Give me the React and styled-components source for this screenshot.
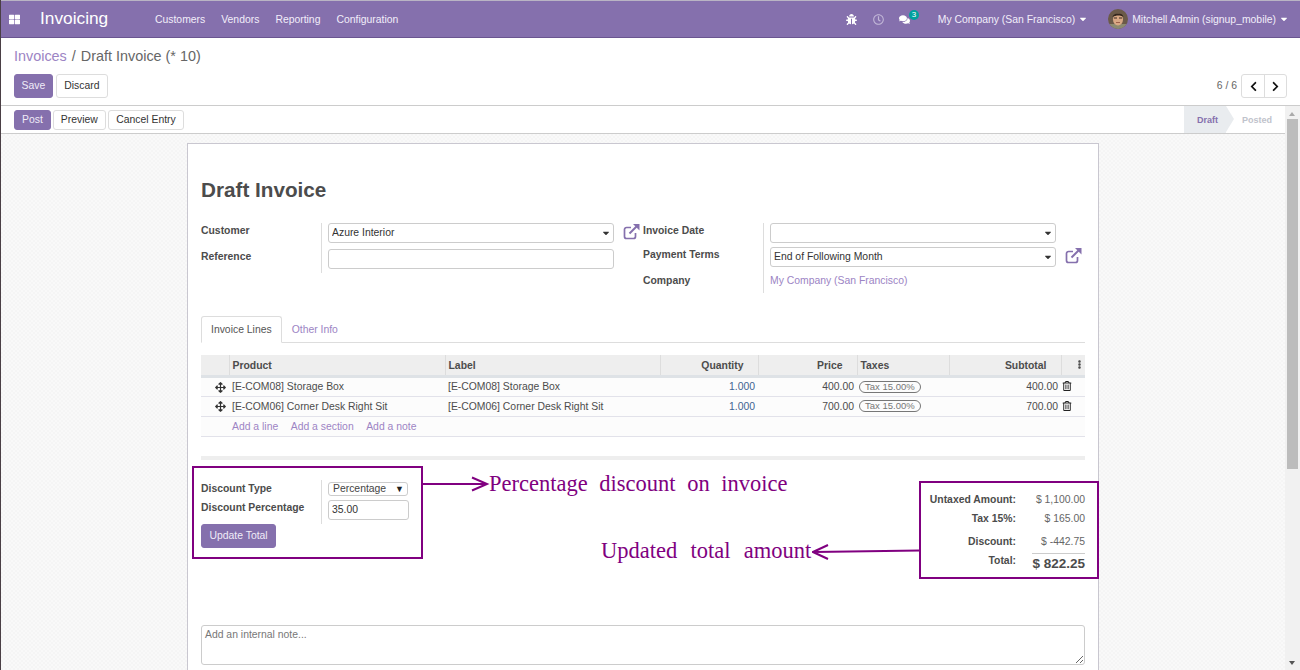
import React from 'react';
import styled, { createGlobalStyle } from 'styled-components';
import { FaThLarge, FaBug, FaRegClock, FaComments, FaCaretDown, FaChevronLeft, FaChevronRight, FaArrowsAlt, FaRegTrashAlt, FaEllipsisV } from 'react-icons/fa';

const NAV = '#8570ad';
const LINK = '#9c84c4';
const MARK = '#800080';
const UI_FONT = '10.4px "Liberation Sans", Arial, sans-serif';

const GlobalStyle = createGlobalStyle`
  html, body { margin: 0; padding: 0; height: 100%; overflow: hidden; }
  body {
    font: ${UI_FONT};
    color: #4c4c4c;
  }
  * { box-sizing: border-box; }
`;

const Page = styled.div`
  position: relative;
  width: 1300px;
  height: 670px;
  display: flex;
  flex-direction: column;
  overflow: hidden;
  background: #fff;
  border-left: 1px solid #4a3f45;
`;

const Navbar = styled.header`
  height: 38px;
  flex: none;
  display: flex;
  align-items: center;
  margin-left: -1px;
  background: ${NAV};
  border-top: 1px solid #b9b4c4;
  border-bottom: 1px solid #6a5590;
  color: #fff;
`;

const AppsIcon = styled.span`
  width: 40px;
  padding-left: 9px;
  display: flex;
  font-size: 11px;
`;

const Brand = styled.span`
  font-size: 17.3px;
  width: 115px;
  padding-bottom: 1px;
`;

const NavLink = styled.span`
  margin-right: 16px;
  color: #f2eefa;
`;

const NavSpacer = styled.div`
  flex: 1;
`;

const NavIcon = styled.span`
  position: relative;
  display: flex;
  font-size: 11px;
  margin-right: ${p => p.$gap}px;
  color: ${p => p.$dim ? '#c3b8d8' : '#fff'};
`;

const Badge = styled.span`
  position: absolute;
  left: 10px;
  top: -4px;
  padding: 0 3px;
  height: 10px;
  line-height: 10px;
  border-radius: 5px;
  background: #00a09d;
  color: #fff;
  font-size: 8px;
`;

const NavDrop = styled.span`
  display: flex;
  align-items: center;
  color: #f2eefa;
  gap: 3px;
  margin-right: ${p => p.$gap}px;
  svg { font-size: 10px; color: #fff; }
`;

const Avatar = styled.svg`
  width: 20px;
  height: 20px;
  margin-right: 4px;
  flex: none;
`;

const ControlPanel = styled.section`
  height: 68px;
  flex: none;
  padding: 7px 13px 0;
  border-bottom: 1px solid #ccc;
`;

const Breadcrumb = styled.div`
  font-size: 14.4px;
  line-height: 22px;
  color: #666;
  a { color: ${LINK}; }
  span { margin: 0 5px; }
`;

const PanelRow = styled.div`
  display: flex;
  align-items: center;
  justify-content: space-between;
  margin-top: 7px;
`;

const Buttons = styled.div`
  display: flex;
  gap: ${p => p.$gap || 3}px;
`;

const Button = styled.button`
  height: ${p => p.$h || 20}px;
  padding: 0 ${p => p.$px || 7}px ${p => p.$h ? 1 : 0}px;
  font: ${UI_FONT};
  border-radius: 3px;
  border: 1px solid ${p => p.$primary ? NAV : '#ddd'};
  background: ${p => p.$primary ? NAV : '#fff'};
  color: ${p => p.$primary ? '#f0ecf8' : '#333'};
`;

const Pager = styled.div`
  display: flex;
  align-items: center;
  gap: 4px;
  color: #666;
`;

const PagerText = styled.span`
  margin-bottom: 1px;
`;

const PagerGroup = styled.div`
  display: flex;
  border: 1px solid #ddd;
  border-radius: 3px;
  height: 24px;
`;

const PagerButton = styled.span`
  width: 22px;
  display: flex;
  align-items: center;
  justify-content: center;
  color: #111;
  font-size: 11px;
  & + & { border-left: 1px solid #ddd; }
`;

const Main = styled.div`
  flex: 1;
  min-height: 0;
  display: flex;
`;

const Content = styled.div`
  flex: 1;
  min-width: 0;
  display: flex;
  flex-direction: column;
`;

const StatusBar = styled.div`
  height: 28px;
  flex: none;
  display: flex;
  align-items: center;
  justify-content: space-between;
  padding-left: 13px;
  background: #fff;
  border-bottom: 1px solid #ccc;
`;

const Statuses = styled.div`
  display: flex;
  align-self: stretch;
  font-size: 9px;
  font-weight: bold;
`;

const Stage = styled.span`
  position: relative;
  display: flex;
  align-items: center;
  padding: 0 ${p => p.$active ? '8px' : '13px'} 0 ${p => p.$active ? '13px' : '16px'};
  color: ${p => p.$active ? '#8570ad' : '#bfc3cc'};
  background: ${p => p.$active ? '#e9ecef' : 'transparent'};
  &::after {
    content: '';
    display: ${p => p.$active ? 'block' : 'none'};
    position: absolute;
    left: 100%;
    top: 0;
    border-left: 8px solid #e9ecef;
    border-top: 13.5px solid transparent;
    border-bottom: 13.5px solid transparent;
  }
`;

const Backdrop = styled.div`
  flex: 1;
  min-height: 0;
  overflow: hidden;
  padding: 9px 0 0 186px;
  background-color: #f9f9f9;
  background-image: conic-gradient(#f5f5f5 25%, transparent 0 50%, #f5f5f5 0 75%, transparent 0);
  background-size: 4px 4px;
`;

const Sheet = styled.div`
  width: 912px;
  height: 560px;
  padding: 30px 13px 0 13px;
  background: #fff;
  border: 1px solid #c9c7d0;
  border-bottom: 0;
`;

const Title = styled.h1`
  margin: 0;
  font-size: 20.7px;
  line-height: 32px;
  font-weight: bold;
  color: #4c4c4c;
`;

const FormGrid = styled.div`
  display: grid;
  grid-template-columns: 442px 442px;
  margin-top: 17px;
  height: 70px;
`;

const Group = styled.div`
  display: grid;
  grid-template-columns: 120px 1fr;
  grid-auto-rows: min-content;
`;

const Label = styled.label`
  font-weight: bold;
  line-height: 14px;
  height: ${p => p.$h}px;
  padding-top: ${p => p.$top ?? 1}px;
  display: block;
  color: #4c4c4c;
`;

const Cell = styled.div`
  display: flex;
  align-items: flex-start;
  height: ${p => p.$h}px;
  padding-left: 6px;
  border-left: 1px solid #ddd;
`;

const FieldBox = styled.div`
  position: relative;
  width: ${p => p.$w || 286}px;
  height: 20px;
`;

const Field = styled.input`
  width: 100%;
  height: 100%;
  padding: 0 3px 1px;
  border: 1px solid #ccc;
  border-radius: 3px;
  background: #fff;
  font: ${UI_FONT};
  color: #333;
  outline: none;
`;

const Caret = styled(FaCaretDown)`
  position: absolute;
  right: 3px;
  top: 5px;
  font-size: 10px;
  color: #333;
`;

const External = styled.svg`
  width: 17px;
  height: 17px;
  margin-left: ${p => p.$gap}px;
  flex: none;
  color: #8570ad;
`;

const CompanyLink = styled.a`
  color: ${LINK};
  line-height: 14px;
  padding-top: 1px;
`;

const Tabs = styled.div`
  display: flex;
  align-items: flex-end;
  height: 27px;
  margin-top: 23px;
  border-bottom: 1px solid #ddd;
`;

const Tab = styled.span`
  height: ${p => p.$active ? 27 : 26}px;
  line-height: ${p => p.$active ? 26 : 28}px;
  padding: 0 ${p => p.$active ? 9 : 10}px;
  color: ${p => p.$active ? '#555' : LINK};
  background: #fff;
  ${p => p.$active && `
    border: 1px solid #ddd;
    border-bottom: 1px solid #fff;
    border-radius: 3px 3px 0 0;
    margin-bottom: -1px;
  `}
`;

const Lines = styled.table`
  width: 884px;
  margin-top: 12px;
  border-collapse: collapse;
  table-layout: fixed;
`;

const Th = styled.th`
  height: 21px;
  padding: 2px ${p => p.$right ? 14 : 2}px 0 3px;
  text-align: ${p => p.$right ? 'right' : 'left'};
  background: #eee;
  color: #4c4c4c;
  border-left: 1px solid #ddd;
  border-bottom: 3px solid #dee2e6;
  &:first-child { border-left: 0; }
`;

const Td = styled.td`
  height: 20px;
  padding: 0 ${p => p.$pr ?? 2}px 0 3px;
  text-align: ${p => p.$right ? 'right' : 'left'};
  background: #fcfcfc;
  color: ${p => p.$blue ? '#3f6491' : '#4c4c4c'};
  border-bottom: 1px solid #e2e2ea;
  white-space: nowrap;
`;

const Handle = styled(Td)`
  text-align: right;
  padding-right: 3px;
  color: #333;
  font-size: 11px;
  svg { vertical-align: middle; }
`;

const TrashCell = styled(Td)`
  color: #222;
  font-size: 10px;
  padding-left: 1px;
  svg { vertical-align: -1px; }
`;

const MoreIcon = styled(FaEllipsisV)`
  margin-left: 10px;
  font-size: 9px;
`;

const AddLink = styled.a`
  color: ${LINK};
  margin-right: 12.5px;
`;

const TaxPill = styled.span`
  display: inline-block;
  height: 12px;
  line-height: 9px;
  margin-left: -1px;
  padding: 0 5px;
  border: 1.5px solid #777;
  border-radius: 7px;
  font-size: 9.5px;
  color: #777;
  vertical-align: middle;
`;

const Divider = styled.div`
  height: 4px;
  margin-top: 19px;
  width: 884px;
  background: #eee;
`;

const Summary = styled.div`
  display: flex;
  justify-content: space-between;
  width: 884px;
  margin-top: 20px;
`;

const DiscountForm = styled.div`
  width: 210px;
`;

const DiscountRows = styled.div`
  display: grid;
  grid-template-columns: 120px 1fr;
  grid-auto-rows: min-content;
`;

const DiscountCell = styled.div`
  height: ${p => p.$h}px;
  padding-left: 6px;
  padding-top: ${p => p.$top || 0}px;
  border-left: 1px solid #ddd;
`;

const FakeSelect = styled.div`
  width: 80px;
  height: 14px;
  display: flex;
  align-items: center;
  justify-content: space-between;
  padding: 0 3px 0 4px;
  border: 1px solid #ccc;
  border-radius: 3px;
  color: #444;
  span:last-child { font-size: 9px; color: #222; }
`;

const Totals = styled.div`
  width: 180px;
  margin-top: 13px;
`;

const TotalRow = styled.div`
  display: flex;
  justify-content: space-between;
  height: ${p => p.$h}px;
  line-height: 14px;
`;

const TotalLabel = styled.span`
  font-weight: bold;
  width: 111px;
  text-align: right;
`;

const TotalValue = styled.span`
  color: #666;
`;

const GrandRow = styled(TotalRow)`
  position: relative;
  &::before {
    content: '';
    position: absolute;
    right: 0;
    top: -1px;
    width: 53px;
    border-top: 1px solid #ccc;
  }
`;

const GrandValue = styled.span`
  font-size: 13.5px;
  font-weight: bold;
  color: #4c4c4c;
  padding-top: 3px;
`;

const Note = styled.textarea`
  display: block;
  width: 884px;
  height: 40px;
  margin-top: 51px;
  padding: 3px 3px;
  border: 1px solid #ccc;
  border-radius: 3px;
  outline: none;
  font: ${UI_FONT};
  &::placeholder { color: #777; }
`;

const ScrollTrack = styled.div`
  width: 15px;
  flex: none;
  background: #f1f1f1;
  position: relative;
`;

const ScrollThumb = styled.div`
  position: absolute;
  top: 13px;
  left: 2px;
  width: 11px;
  height: 350px;
  background: #bcbcbc;
`;

const ScrollArrow = styled.span`
  position: absolute;
  left: 4px;
  ${p => p.$down ? 'bottom: 5px;' : 'top: 6px;'}
  border-left: 3.5px solid transparent;
  border-right: 3.5px solid transparent;
  ${p => p.$down ? 'border-top: 4px solid #555;' : 'border-bottom: 4px solid #aaa;'}
`;

const MarkBox = styled.div`
  position: absolute;
  left: ${p => p.$x}px;
  top: ${p => p.$y}px;
  width: ${p => p.$w}px;
  height: ${p => p.$h}px;
  border: 2px solid ${MARK};
  pointer-events: none;
`;

const MarkText = styled.div`
  position: absolute;
  left: ${p => p.$x}px;
  top: ${p => p.$y}px;
  font-family: "Liberation Serif", serif;
  font-size: 22.5px;
  line-height: 26px;
  word-spacing: ${p => p.$ws}px;
  color: ${MARK};
  white-space: nowrap;
`;

const MarkArrow = styled.svg`
  position: absolute;
  left: ${p => p.$x}px;
  top: ${p => p.$y}px;
  fill: none;
  stroke: ${MARK};
  stroke-width: 2;
`;

const ExternalIcon = ({ gap }) => (
  <External $gap={gap} viewBox="0 0 17 17">
    <path d="M12.5 10v3.5a2 2 0 0 1-2 2h-7a2 2 0 0 1-2-2v-7a2 2 0 0 1 2-2H8" fill="none" stroke="currentColor" strokeWidth="1.7" />
    <path d="M6.5 10.5L14 3" fill="none" stroke="currentColor" strokeWidth="2" />
    <path d="M10 1h6.5v6.5z" fill="currentColor" />
  </External>
);

const rows = [
  { code: '[E-COM08] Storage Box', price: '400.00' },
  { code: '[E-COM06] Corner Desk Right Sit', price: '700.00' },
];

export default function App() {
  return (
    <Page>
      <GlobalStyle />
      <Navbar>
        <AppsIcon><FaThLarge /></AppsIcon>
        <Brand>Invoicing</Brand>
        <NavLink>Customers</NavLink>
        <NavLink>Vendors</NavLink>
        <NavLink>Reporting</NavLink>
        <NavLink>Configuration</NavLink>
        <NavSpacer />
        <NavIcon $gap={16}><FaBug /></NavIcon>
        <NavIcon $gap={15} $dim><FaRegClock /></NavIcon>
        <NavIcon $gap={28}><FaComments /><Badge>3</Badge></NavIcon>
        <NavDrop $gap={20}>My Company (San Francisco) <FaCaretDown /></NavDrop>
        <Avatar viewBox="0 0 20 20">
          <clipPath id="face"><circle cx="10" cy="10" r="10" /></clipPath>
          <g clipPath="url(#face)">
            <rect width="20" height="20" fill="#6b5a48" />
            <rect y="15" width="20" height="5" fill="#8d8a70" />
            <ellipse cx="10" cy="10.5" rx="5" ry="6" fill="#d9a884" />
            <path d="M4.5 8C5 3.5 15 3 15.5 8 13 6 8 6 4.5 8z" fill="#33261d" />
            <path d="M6 9h3M11 9h3" stroke="#3a2a20" strokeWidth="1" />
            <path d="M8 13.5h4" stroke="#a0614a" strokeWidth="1" />
          </g>
        </Avatar>
        <NavDrop $gap={11}>Mitchell Admin (signup_mobile) <FaCaretDown /></NavDrop>
      </Navbar>

      <ControlPanel>
        <Breadcrumb><a>Invoices</a><span>/</span>Draft Invoice (* 10)</Breadcrumb>
        <PanelRow>
          <Buttons>
            <Button $primary $h={24} $px={6.5}>Save</Button>
            <Button $h={24} $px={7.5}>Discard</Button>
          </Buttons>
          <Pager>
            <PagerText>6 / 6</PagerText>
            <PagerGroup>
              <PagerButton><FaChevronLeft /></PagerButton>
              <PagerButton><FaChevronRight /></PagerButton>
            </PagerGroup>
          </Pager>
        </PanelRow>
      </ControlPanel>

      <Main>
        <Content>
          <StatusBar>
            <Buttons $gap={2}>
              <Button $primary>Post</Button>
              <Button>Preview</Button>
              <Button $px={7.5}>Cancel Entry</Button>
            </Buttons>
            <Statuses>
              <Stage $active>Draft</Stage>
              <Stage>Posted</Stage>
            </Statuses>
          </StatusBar>
          <Backdrop>
            <Sheet>
              <Title>Draft Invoice</Title>
              <FormGrid>
                <Group>
                  <Label $h={26}>Customer</Label>
                  <Cell $h={26}>
                    <FieldBox><Field defaultValue="Azure Interior" /><Caret /></FieldBox>
                    <ExternalIcon gap={9} />
                  </Cell>
                  <Label $h={24}>Reference</Label>
                  <Cell $h={24}><FieldBox><Field /></FieldBox></Cell>
                </Group>
                <Group>
                  <Label $h={24}>Invoice Date</Label>
                  <Cell $h={24}><FieldBox><Field /><Caret /></FieldBox></Cell>
                  <Label $h={26}>Payment Terms</Label>
                  <Cell $h={26}>
                    <FieldBox><Field defaultValue="End of Following Month" /><Caret /></FieldBox>
                    <ExternalIcon gap={9} />
                  </Cell>
                  <Label $h={20}>Company</Label>
                  <Cell $h={20}><CompanyLink>My Company (San Francisco)</CompanyLink></Cell>
                </Group>
              </FormGrid>

              <Tabs>
                <Tab $active>Invoice Lines</Tab>
                <Tab>Other Info</Tab>
              </Tabs>

              <Lines>
                <colgroup>
                  <col width="28" /><col width="216" /><col width="215" /><col width="98" />
                  <col width="99" /><col width="92" /><col width="112" /><col width="24" />
                </colgroup>
                <thead>
                  <tr>
                    <Th />
                    <Th>Product</Th>
                    <Th>Label</Th>
                    <Th $right>Quantity</Th>
                    <Th $right>Price</Th>
                    <Th>Taxes</Th>
                    <Th $right>Subtotal</Th>
                    <Th><MoreIcon /></Th>
                  </tr>
                </thead>
                <tbody>
                  {rows.map(r => (
                    <tr key={r.code}>
                      <Handle><FaArrowsAlt /></Handle>
                      <Td>{r.code}</Td>
                      <Td>{r.code}</Td>
                      <Td $right $blue $pr={3}>1.000</Td>
                      <Td $right $pr={3}>{r.price}</Td>
                      <Td><TaxPill>Tax 15.00%</TaxPill></Td>
                      <Td $right $pr={3}>{r.price}</Td>
                      <TrashCell><FaRegTrashAlt /></TrashCell>
                    </tr>
                  ))}
                  <tr>
                    <Td />
                    <Td colSpan={7}>
                      <AddLink>Add a line</AddLink>
                      <AddLink>Add a section</AddLink>
                      <AddLink>Add a note</AddLink>
                    </Td>
                  </tr>
                </tbody>
              </Lines>
              <Divider />

              <Summary>
                <DiscountForm>
                  <DiscountRows>
                    <Label $h={20} $top={2}>Discount Type</Label>
                    <DiscountCell $h={20} $top={2}>
                      <FakeSelect><span>Percentage</span><span>▼</span></FakeSelect>
                    </DiscountCell>
                    <Label $h={24}>Discount Percentage</Label>
                    <DiscountCell $h={24}><FieldBox $w={81}><Field defaultValue="35.00" /></FieldBox></DiscountCell>
                  </DiscountRows>
                  <Button $primary $h={24} $px={7.5}>Update Total</Button>
                </DiscountForm>
                <Totals>
                  <TotalRow $h={19}><TotalLabel>Untaxed Amount:</TotalLabel><TotalValue>$ 1,100.00</TotalValue></TotalRow>
                  <TotalRow $h={23}><TotalLabel>Tax 15%:</TotalLabel><TotalValue>$ 165.00</TotalValue></TotalRow>
                  <TotalRow $h={19}><TotalLabel>Discount:</TotalLabel><TotalValue>$ -442.75</TotalValue></TotalRow>
                  <GrandRow $h={20}><TotalLabel>Total:</TotalLabel><GrandValue>$ 822.25</GrandValue></GrandRow>
                </Totals>
              </Summary>

              <Note placeholder="Add an internal note..." />
            </Sheet>
          </Backdrop>
        </Content>
        <ScrollTrack>
          <ScrollArrow />
          <ScrollThumb />
          <ScrollArrow $down />
        </ScrollTrack>
      </Main>

      <MarkBox $x={191} $y={466} $w={231} $h={93} />
      <MarkBox $x={918} $y={481} $w={180} $h={98} />
      <MarkArrow $x={422} $y={474} width="68" height="20" viewBox="0 0 68 20">
        <path d="M0 10H63M49 3.5L64 10L49 16.5" />
      </MarkArrow>
      <MarkArrow $x={811} $y={541} width="110" height="20" viewBox="0 0 110 20">
        <path d="M108 9.5L2 11M16 4L1 11L16 18" />
      </MarkArrow>
      <MarkText $x={488} $y={471} $ws={6}>Percentage discount on invoice</MarkText>
      <MarkText $x={600} $y={538} $ws={7.7}>Updated total amount</MarkText>
    </Page>
  );
}
